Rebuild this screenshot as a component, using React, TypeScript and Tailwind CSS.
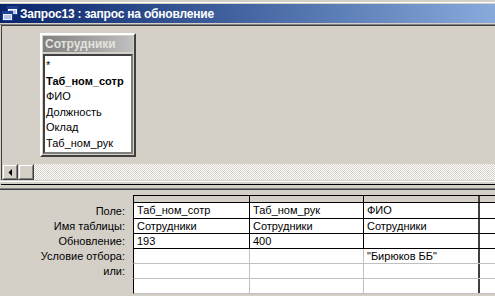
import React from "react";

const font = { fontFamily: '"Liberation Sans", Arial, sans-serif' };

const QueryIcon = () => (
  <svg width="16" height="15" viewBox="0 0 16 15" className="shrink-0">
    <rect x="5.5" y="0.5" width="10" height="8" fill="#ffffff" stroke="#1c3f94" />
    <rect x="6" y="1" width="9" height="2" fill="#1c3f94" />
    <line x1="7" y1="5" x2="14" y2="5" stroke="#7b9bd6" />
    <line x1="7" y1="7" x2="14" y2="7" stroke="#7b9bd6" />
    <rect x="0.5" y="5.5" width="10" height="9" fill="#e8eef8" stroke="#1c3f94" />
    <rect x="1" y="6" width="9" height="2" fill="#1c3f94" />
    <line x1="2" y1="10" x2="9" y2="10" stroke="#7b9bd6" />
    <line x1="2" y1="12" x2="9" y2="12" stroke="#7b9bd6" />
  </svg>
);

const fields = ["*", "Таб_ном_сотр", "ФИО", "Должность", "Оклад", "Таб_ном_рук"];

const labels = ["Поле:", "Имя таблицы:", "Обновление:", "Условие отбора:", "или:", ""];

const cells = [
  ["Таб_ном_сотр", "Таб_ном_рук", "ФИО"],
  ["Сотрудники", "Сотрудники", "Сотрудники"],
  ["193", "400", ""],
  ["", "", "\"Бирюков ББ\""],
  ["", "", ""],
  ["", "", ""],
];

const RaisedButton = ({ children }: { children?: React.ReactNode }) => (
  <div className="w-[16px] h-[16px] flex border border-t-[#d4d0c8] border-l-[#d4d0c8] border-r-[#404040] border-b-[#404040]">
    <div className="flex-1 flex items-center justify-center border border-t-white border-l-white border-r-[#808080] border-b-[#808080] bg-[#d4d0c8]">
      {children}
    </div>
  </div>
);

export default function App() {
  return (
    <div className="w-[495px] h-[296px] overflow-hidden bg-[#d4d0c8] flex flex-col text-black" style={font}>
      <div className="h-[2px] bg-[#d4d0c8]" />
      <div className="h-[1px] bg-white" />
      <div className="h-[1px] bg-[#d4d0c8]" />

      {/* title bar */}
      <div className="h-[19px] flex items-center gap-[2px] pl-[2px] bg-linear-to-r from-[#0a246a] to-[#88aadb]">
        <QueryIcon />
        <span className="text-white font-bold text-[12px] leading-none tracking-[-0.2px]">Запрос13 : запрос на обновление</span>
      </div>
      <div className="h-[1px] bg-[#d4d0c8]" />
      <div className="h-[1px] bg-[#808080]" />

      {/* upper pane */}
      <div className="ml-[1px] border-t border-l border-[#404040] flex flex-col">
        <div className="h-[138px] pl-[38px] pt-[7px]">
          <div className="w-[96px] h-[124px] flex flex-col border-2 border-t-white border-l-white border-r-[#404040] border-b-[#404040] p-[1px] gap-[2px]">
            <div className="h-[16px] flex items-center pl-[2px] bg-linear-to-r from-[#808080] to-[#c0c0c0]">
              <span className="text-[#e4e2dc] font-bold text-[12px] leading-none">Сотрудники</span>
            </div>
            <div className="flex-1 bg-white border-2 border-t-[#404040] border-l-[#404040] border-r-[#808080] border-b-[#808080] pl-[1px] pt-[2px] text-[11px] leading-[15.5px]">
              {fields.map((f, i) => (
                <div key={f} className={i === 1 ? "font-bold whitespace-nowrap" : "whitespace-nowrap"}>{f}</div>
              ))}
            </div>
          </div>
        </div>

        {/* horizontal scrollbar */}
        <div className="h-[16px] flex">
          <RaisedButton>
            <svg width="4" height="7" viewBox="0 0 4 7">
              <polygon points="4,0 4,7 0.5,3.5" fill="#000" />
            </svg>
          </RaisedButton>
          <RaisedButton />
          <div className="flex-1 bg-[image:repeating-conic-gradient(#ffffff_0_25%,#d4d0c8_0_50%)] bg-[length:2px_2px]" />
        </div>
      </div>

      {/* splitter */}
      <div className="h-[1px] bg-[#d4d0c8]" />
      <div className="h-[1px] bg-white" />
      <div className="h-[2px] bg-[#d4d0c8]" />
      <div className="h-[1px] ml-[1px] bg-black" />
      <div className="h-[3px] bg-[#d4d0c8]" />
      <div className="h-[1px] bg-[#808080]" />
      <div className="h-[1px] bg-[#404040]" />
      <div className="h-[5px] bg-[#d4d0c8]" />

      {/* design grid */}
      <div className="flex flex-col text-[11px]">
        <div className="flex">
          <div className="w-[133px] shrink-0" />
          <div className="flex-1 flex h-[8px] border-t border-b border-l border-black bg-[#d4d0c8]">
            <div className="w-[116px] border-r border-black" />
            <div className="w-[114px] border-r border-black" />
            <div className="w-[116px] border-r-2 border-r-[#404040]" />
            <div className="flex-1" />
          </div>
        </div>
        {labels.map((label, r) => {
          const dark = r < 3;
          const line = dark ? "border-black" : "border-[#c0c0c0]";
          return (
            <div key={r} className="flex">
              <div className={`w-[133px] shrink-0 text-right pr-[8px] flex items-center justify-end ${r === 0 ? "h-[16px]" : "h-[15px]"}`}>
                {label}
              </div>
              <div className={`flex-1 flex bg-white border-l border-l-black border-b ${line} ${r === 0 ? "h-[16px]" : "h-[15px]"}`}>
                <div className={`w-[116px] border-r ${line} pl-[3px] flex items-center whitespace-nowrap`}>{cells[r][0]}</div>
                <div className={`w-[114px] border-r ${line} pl-[3px] flex items-center whitespace-nowrap`}>{cells[r][1]}</div>
                <div className="w-[116px] border-r-2 border-r-[#404040] pl-[3px] flex items-center whitespace-nowrap">{cells[r][2]}</div>
                <div className="flex-1" />
              </div>
            </div>
          );
        })}
      </div>
    </div>
  );
}
